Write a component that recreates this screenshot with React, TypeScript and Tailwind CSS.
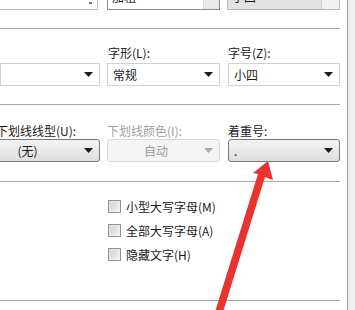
import React from 'react';

const font = { fontFamily: '"Noto Sans CJK SC", "Noto Sans", sans-serif' };

const Caret = ({ color = '#1a1a1a' }: { color?: string }) => (
  <svg width="9" height="5" viewBox="0 0 9 5">
    <path d="M0 0h9L4.5 5z" fill={color} />
  </svg>
);

const Select = ({ text, variant = 'plain', center }: { text: string; variant?: 'plain' | 'button' | 'disabled'; center?: boolean }) => {
  const base = 'flex items-center h-[23px] pr-[6px] text-[12px] leading-[15px]';
  const skin =
    variant === 'button'
      ? 'border border-[#7a7a7a] rounded-[3px] bg-gradient-to-b from-[#f3f3f3] to-[#dedede] text-[#1a1a1a]'
      : variant === 'disabled'
      ? 'border border-[#d9d9d9] rounded-[3px] bg-[#f4f4f4] text-[#9a9a9a]'
      : 'border border-[#d2d2d2] bg-white text-[#1a1a1a]';
  return (
    <div className={`${base} ${skin}`}>
      <span className={center ? 'flex-1 text-center' : 'flex-1 pl-[5px]'}>{text}</span>
      <Caret color={variant === 'disabled' ? '#a8a8a8' : '#1a1a1a'} />
    </div>
  );
};

const Check = ({ label }: { label: string }) => (
  <div className="flex items-center gap-[5px] h-[24px]">
    <div className="w-[13px] h-[13px] border border-[#929292] bg-gradient-to-br from-[#dcdcdc] to-[#f6f6f6] p-[2px]">
      <div className="w-full h-full bg-gradient-to-br from-[#d4d4d4] to-[#ececec]" />
    </div>
    <span className="text-[12px] leading-[15px] text-[#1a1a1a]">{label}</span>
  </div>
);

const Sep = () => <div className="h-px shrink-0 bg-[#a8a8a8] w-[340px]" />;

const Label = ({ children, muted, className = '' }: { children: React.ReactNode; muted?: boolean; className?: string }) => (
  <div className={`h-[15px] text-[12px] leading-[15px] whitespace-nowrap ${muted ? 'text-[#a0a0a0]' : 'text-[#1a1a1a]'} ${className}`}>
    {children}
  </div>
);

export default function App() {
  return (
    <div className="relative w-[355px] h-[310px] overflow-hidden bg-white flex" style={font}>
      <div className="w-[348px] h-full border-r border-[#9a9a9a] flex flex-col">
        {/* list boxes cut off at top */}
        <div className="flex h-[10px] shrink-0">
          <div className="w-[98px] border-r border-b border-[#bdbdbd] flex items-end justify-end pr-[5px] pb-[5px]">
            <div className="w-[3px] h-[2px] bg-[#777]" />
          </div>
          <div className="w-[113px] ml-[9px] border-x border-b border-[#8c8c8c] flex overflow-hidden">
            <div className="flex-1 pl-[4px] text-[12px] leading-[15px] -mt-[11px] text-[#1a1a1a]">加粗</div>
            <div className="w-[16px] bg-[#e9e9e9] border-l border-[#dcdcdc]" />
          </div>
          <div className="w-[113px] ml-[7px] border-x border-b border-[#bdbdbd] bg-[#e2e2e2] flex overflow-hidden">
            <div className="flex-1 pl-[4px] text-[12px] leading-[15px] -mt-[11px] text-[#1a1a1a]">小四</div>
            <div className="w-[18px] bg-[#f0f0f0] border-l border-[#d0d0d0]" />
          </div>
        </div>

        <div className="mt-[18px]"><Sep /></div>

        {/* 字形 / 字号 */}
        <div className="h-[75px] shrink-0 pt-[16px] flex">
          <div className="w-[100px] flex flex-col">
            <Label>{''}</Label>
            <div className="mt-[3px]"><Select text="" /></div>
          </div>
          <div className="w-[113px] ml-[7px] flex flex-col">
            <Label className="pl-px">字形(L):</Label>
            <div className="mt-[3px]"><Select text="常规" /></div>
          </div>
          <div className="w-[112px] ml-[8px] flex flex-col">
            <Label>字号(Z):</Label>
            <div className="mt-[3px]"><Select text="小四" /></div>
          </div>
        </div>

        <Sep />

        {/* 下划线 / 着重号 */}
        <div className="h-[76px] shrink-0 pt-[18px] flex">
          <div className="w-[100px] flex flex-col">
            <Label className="-ml-[4px]">下划线线型(U):</Label>
            <div className="mt-[1px] -ml-[30px]"><Select text="(无)" variant="button" center /></div>
          </div>
          <div className="w-[113px] ml-[7px] flex flex-col">
            <Label muted>下划线颜色(I):</Label>
            <div className="mt-[1px]"><Select text="自动" variant="disabled" center /></div>
          </div>
          <div className="w-[112px] ml-[8px] flex flex-col">
            <Label>着重号:</Label>
            <div className="mt-[1px]"><Select text="." variant="button" /></div>
          </div>
        </div>

        <Sep />

        <div className="h-[118px] shrink-0 flex flex-col pl-[108px] pt-[12px]">
          <Check label="小型大写字母(M)" />
          <Check label="全部大写字母(A)" />
          <Check label="隐藏文字(H)" />
        </div>

        <Sep />
      </div>
      <div className="flex-1 bg-[#f0f0f0]" />

      <svg className="absolute left-0 top-0 pointer-events-none" width="355" height="310" viewBox="0 0 355 310">
        <polygon
          points="268,161 273,180 265,177 223,312 215,312 258,174 253,173"
          fill="#e8332f"
        />
      </svg>
    </div>
  );
}
